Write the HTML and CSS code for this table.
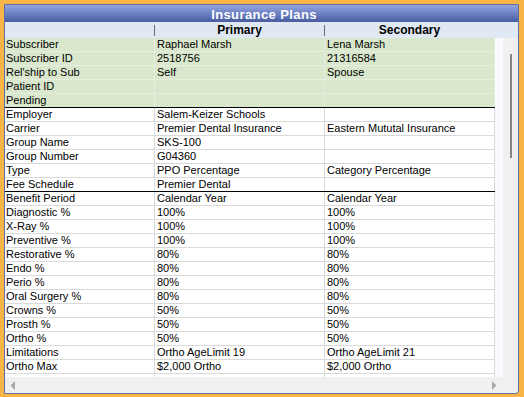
FILE: index.html
```html
<!DOCTYPE html>
<html>
<head>
<meta charset="utf-8">
<link rel="stylesheet" href="styles.css">
</head>
<body>
<div class="panel">
  <div class="title">Insurance Plans</div>
  <div class="head">
    <div class="hc lab"></div><div class="hsep"></div>
    <div class="hc">Primary</div><div class="hsep"></div>
    <div class="hc">Secondary</div>
  </div>
  <div class="body">
    <div class="view">
      <div class="row g"><div>Subscriber</div><div>Raphael Marsh</div><div>Lena Marsh</div></div>
      <div class="row g"><div>Subscriber ID</div><div>2518756</div><div>21316584</div></div>
      <div class="row g"><div>Rel'ship to Sub</div><div>Self</div><div>Spouse</div></div>
      <div class="row g"><div>Patient ID</div><div></div><div></div></div>
      <div class="row g sep"><div>Pending</div><div></div><div></div></div>
      <div class="row"><div>Employer</div><div>Salem-Keizer Schools</div><div></div></div>
      <div class="row"><div>Carrier</div><div>Premier Dental Insurance</div><div>Eastern Mututal Insurance</div></div>
      <div class="row"><div>Group Name</div><div>SKS-100</div><div></div></div>
      <div class="row"><div>Group Number</div><div>G04360</div><div></div></div>
      <div class="row"><div>Type</div><div>PPO Percentage</div><div>Category Percentage</div></div>
      <div class="row sep"><div>Fee Schedule</div><div>Premier Dental</div><div></div></div>
      <div class="row"><div>Benefit Period</div><div>Calendar Year</div><div>Calendar Year</div></div>
      <div class="row"><div>Diagnostic %</div><div>100%</div><div>100%</div></div>
      <div class="row"><div>X-Ray %</div><div>100%</div><div>100%</div></div>
      <div class="row"><div>Preventive %</div><div>100%</div><div>100%</div></div>
      <div class="row"><div>Restorative %</div><div>80%</div><div>80%</div></div>
      <div class="row"><div>Endo %</div><div>80%</div><div>80%</div></div>
      <div class="row"><div>Perio %</div><div>80%</div><div>80%</div></div>
      <div class="row"><div>Oral Surgery %</div><div>80%</div><div>80%</div></div>
      <div class="row"><div>Crowns %</div><div>50%</div><div>50%</div></div>
      <div class="row"><div>Prosth %</div><div>50%</div><div>50%</div></div>
      <div class="row"><div>Ortho %</div><div>50%</div><div>50%</div></div>
      <div class="row"><div>Limitations</div><div>Ortho AgeLimit 19</div><div>Ortho AgeLimit 21</div></div>
      <div class="row"><div>Ortho Max</div><div>$2,000 Ortho</div><div>$2,000 Ortho</div></div>
      <div class="row"><div></div><div></div><div></div></div>
    </div>
    <div class="vscroll"><div class="thumb"></div></div>
  </div>
  <div class="hscroll">
    <svg class="arr" width="6" height="9" viewBox="0 0 6 9"><polygon points="5,0 5,9 0.5,4.5" fill="#a8a8a8"/></svg>
    <svg class="arr" width="6" height="9" viewBox="0 0 6 9"><polygon points="1,0 1,9 5.5,4.5" fill="#a8a8a8"/></svg>
  </div>
</div>
</body>
</html>
```

FILE: styles.css
```css
html, body {
  margin: 0;
  padding: 0;
}
body {
  width: 524px;
  height: 397px;
  box-sizing: border-box;
  padding: 4px 5px 3px 4px;
  background: #f9b446;
  font-family: "Liberation Sans", Arial, sans-serif;
  overflow: hidden;
}
.panel {
  width: 515px;
  height: 390px;
  box-sizing: border-box;
  border: 1px solid #5e6fa3;
  border-radius: 0 0 3px 0;
  background: #f0f0f0;
  display: flex;
  flex-direction: column;
  overflow: hidden;
}
.title {
  height: 17px;
  box-sizing: border-box;
  padding: 2px 0 0 5px;
  line-height: 15px;
  font-size: 13px;
  font-weight: bold;
  letter-spacing: 0.4px;
  color: #ffffff;
  text-align: center;
  background: linear-gradient(to bottom, #93a4dc 0%, #7185c6 45%, #566aae 80%, #4b5d9f 100%);
}
.head {
  height: 16px;
  box-sizing: border-box;
  padding-top: 1px;
  background: #dfe8f3;
  display: flex;
  font-size: 12px;
  font-weight: bold;
  line-height: 14px;
  color: #000;
}
.hc {
  width: 169px;
  text-align: center;
}
.hc.lab {
  width: 149px;
}
.hsep {
  width: 1px;
  height: 11px;
  margin-top: 2px;
  background: #6f6f6f;
}
.body {
  height: 339px;
  display: flex;
}
.view {
  width: 498px;
  height: 339px;
  overflow: hidden;
  background: #f8fafd;
}
.row {
  width: 490px;
  height: 14px;
  box-sizing: border-box;
  display: grid;
  grid-template-columns: 150px 170px 170px;
  background: #ffffff;
  border-bottom: 1px solid #d9d9d9;
  font-size: 11px;
  line-height: 13px;
  color: #000;
}
.row > div {
  border-right: 1px solid #d9d9d9;
  padding-left: 2px;
  white-space: nowrap;
  overflow: hidden;
}
.row > div:first-child {
  padding-left: 1px;
}
.row.g {
  background: #d9e8cc;
  border-bottom-color: #e6eee0;
}
.row.g > div {
  border-right-color: #e6eee0;
}
.row.sep {
  border-bottom-color: #000000;
}
.vscroll {
  width: 15px;
  height: 339px;
  box-sizing: border-box;
  padding: 16px 0 0 7px;
  background: #f0f0f0;
}
.thumb {
  width: 2px;
  height: 104px;
  background: #868686;
}
.hscroll {
  height: 16px;
  width: 498px;
  box-sizing: border-box;
  padding: 4px 6px 0 5px;
  display: flex;
  justify-content: space-between;
  align-items: flex-start;
  background: #f0f0f0;
}
.arr {
  display: block;
}
```
